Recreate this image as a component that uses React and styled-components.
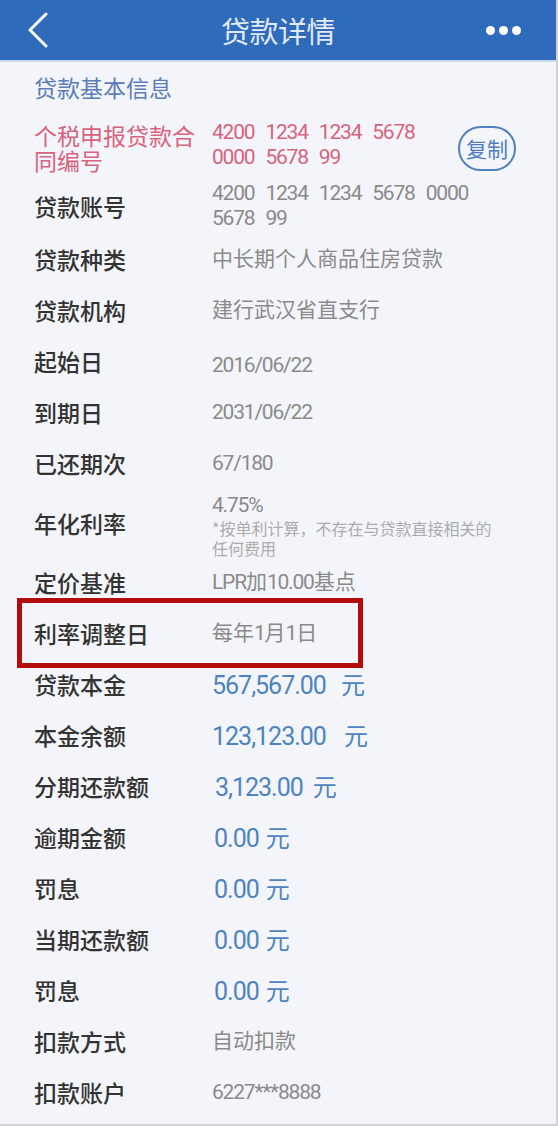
import React from "react";
import styled, { createGlobalStyle } from "styled-components";

const GlobalStyle = createGlobalStyle`
    html, body {
        margin: 0;
        padding: 0;
        background: #f4f5fa;
    }
    * {
        box-sizing: border-box;
    }
`

const Page = styled.div`
    width: 558px;
    height: 1126px;
    background: #f4f5fa;
    border-right: 2px solid #d2d3d8;
    border-bottom: 2px solid #d2d3d8;
    overflow: hidden;
    font-family: Roboto, "Noto Sans CJK SC", sans-serif;
`
const Header = styled.div`
    height: 62px;
    background: #2e6bbb;
    border-bottom: 2px solid #c9d7ec;
    display: grid;
    grid-template-columns: 110px 1fr 110px;
    align-items: center;
`
const Side = styled.div`
    display: flex;
    align-items: center;
    justify-content: ${p => p.$right ? "flex-end" : "flex-start"};
    padding: ${p => p.$right ? "0 35px 0 0" : "0 0 0 26px"};
`
const Title = styled.h1`
    margin: 0;
    text-align: center;
    font-family: "Noto Sans CJK SC", sans-serif;
    font-weight: 400;
    font-size: 29px;
    color: #e3eaf6;
    letter-spacing: -0.5px;
`
const Dots = styled.div`
    display: flex;
    column-gap: 4px;
    span {
        width: 9px;
        height: 9px;
        border-radius: 50%;
        background: #fff;
    }
`
const Content = styled.div`
    padding-left: 34px;
`
const Section = styled.div`
    height: 50px;
    padding-top: 10px;
    font-family: "Noto Sans CJK SC", sans-serif;
    font-size: 23px;
    line-height: 30px;
    color: #5a7db9;
`
const Row = styled.div`
    position: relative;
    height: ${p => p.$h || 51}px;
    display: grid;
    grid-template-columns: 178px 1fr auto;
    align-items: center;
    padding-right: 40px;
`
const Label = styled.div`
    font-family: "Noto Sans CJK SC", sans-serif;
    font-size: 23px;
    line-height: 25px;
    color: ${p => p.$pink ? "#d8637d" : "#333"};
    font-weight: ${p => p.$pink ? 400 : 500};
    padding-top: ${p => p.$down || 0}px;
`
const Value = styled.div`
    font-family: Roboto, "Noto Sans CJK SC", sans-serif;
    font-size: 21px;
    line-height: 25px;
    color: ${p => p.$pink ? "#d8637d" : "#8a8a8a"};
    padding-top: ${p => p.$down || 0}px;
    max-width: 290px;
`
const Num = styled.span`
    letter-spacing: -1.2px;
    word-spacing: ${p => p.$ws || 0}px;
`
const Note = styled.div`
    font-family: "Noto Sans CJK SC", sans-serif;
    font-size: 16px;
    line-height: 20px;
    color: #ababab;
`
const Amount = styled.div`
    font-family: Roboto, "Noto Sans CJK SC", sans-serif;
    font-size: 25px;
    line-height: 28px;
    color: #4d84c1;
    padding-left: ${p => p.$x || 0}px;
    span {
        letter-spacing: -1px;
    }
    b {
        font-weight: 400;
        font-family: "Noto Sans CJK SC", sans-serif;
        font-size: 24px;
        margin-left: ${p => p.$gap}px;
    }
`
const CopyButton = styled.div`
    width: 58px;
    height: 45px;
    border: 2px solid #5181bc;
    border-radius: 23px;
    display: grid;
    place-items: center;
    font-family: "Noto Sans CJK SC", sans-serif;
    font-size: 21px;
    color: #4d7fc0;
    margin-top: 6px;
`
const Highlight = styled.div`
    position: absolute;
    left: -17px;
    top: -10px;
    width: 346px;
    height: 70px;
    border: 5px solid #b60b0b;
    pointer-events: none;
`

function BackIcon() {
    return (
        <svg width="24" height="36" viewBox="0 0 24 36">
            <path d="M20 2 L4 18 L20 34" fill="none" stroke="#fff" strokeWidth="3" strokeLinecap="round" strokeLinejoin="round" />
        </svg>
    )
}

const amounts = [
    ["贷款本金", "567,567.00", 15, 0],
    ["本金余额", "123,123.00", 18, 0],
    ["分期还款额", "3,123.00", 10, 3],
    ["逾期金额", "0.00", 7, 2],
    ["罚息", "0.00", 7, 2],
    ["当期还款额", "0.00", 7, 2],
    ["罚息", "0.00", 7, 2],
]

export default function App() {
    return (
        <Page>
            <GlobalStyle />
            <Header>
                <Side><BackIcon /></Side>
                <Title>贷款详情</Title>
                <Side $right><Dots><span /><span /><span /></Dots></Side>
            </Header>
            <Content>
                <Section>贷款基本信息</Section>
                <Row $h={66}>
                    <Label $pink $down={6}>个税申报贷款合同编号</Label>
                    <Value $pink><Num $ws={7}>4200 1234 1234 5678 0000 5678 99</Num></Value>
                    <CopyButton>复制</CopyButton>
                </Row>
                <Row $h={56}>
                    <Label>贷款账号</Label>
                    <Value><Num $ws={7}>4200 1234 1234 5678 0000 5678 99</Num></Value>
                </Row>
                <Row>
                    <Label>贷款种类</Label>
                    <Value>中长期个人商品住房贷款</Value>
                </Row>
                <Row>
                    <Label>贷款机构</Label>
                    <Value>建行武汉省直支行</Value>
                </Row>
                <Row>
                    <Label>起始日</Label>
                    <Value $down={8}><Num>2016/06/22</Num></Value>
                </Row>
                <Row>
                    <Label>到期日</Label>
                    <Value><Num>2031/06/22</Num></Value>
                </Row>
                <Row>
                    <Label>已还期次</Label>
                    <Value><Num>67/180</Num></Value>
                </Row>
                <Row $h={68}>
                    <Label>年化利率</Label>
                    <Value $down={4}>
                        <Num>4.75%</Num>
                        <Note>*按单利计算，不存在与贷款直接相关的任何费用</Note>
                    </Value>
                </Row>
                <Row>
                    <Label>定价基准</Label>
                    <Value><Num>LPR</Num>加<Num>10.00</Num>基点</Value>
                </Row>
                <Row>
                    <Highlight />
                    <Label>利率调整日</Label>
                    <Value>每年<Num>1</Num>月<Num>1</Num>日</Value>
                </Row>
                {amounts.map(([label, num, gap, x], i) => (
                    <Row key={i}>
                        <Label>{label}</Label>
                        <Amount $gap={gap} $x={x}><span>{num}</span><b>元</b></Amount>
                    </Row>
                ))}
                <Row>
                    <Label>扣款方式</Label>
                    <Value>自动扣款</Value>
                </Row>
                <Row>
                    <Label>扣款账户</Label>
                    <Value><Num>6227***8888</Num></Value>
                </Row>
            </Content>
        </Page>
    )
}
